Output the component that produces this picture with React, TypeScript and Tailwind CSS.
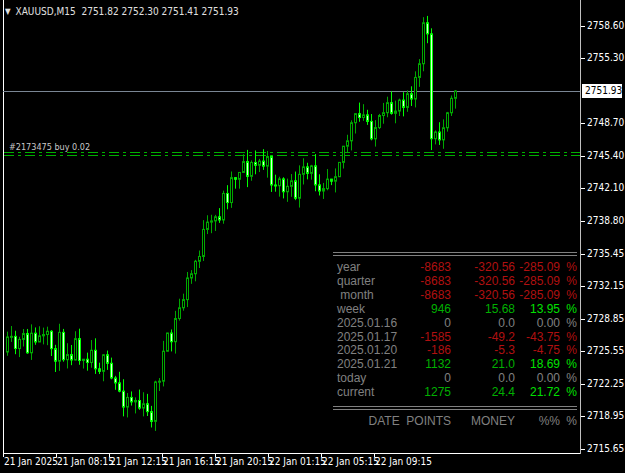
import React from "react";

const anchors: [number, number][] = [
  [6,352],[20,345],[35,340],[50,348],[70,345],[90,350],[100,365],[112,385],[125,395],[135,400],[145,420],[150,410],[160,360],[170,340],[180,300],[190,275],[200,240],[210,230],[220,205],[230,180],[240,160],[250,170],[260,160],[270,175],[280,185],[290,195],[300,180],[310,175],[320,178],[330,170],[340,150],[350,130],[360,118],[370,125],[380,128],[390,110],[400,95],[410,85],[418,70],[422,35],[426,32],[430,140],[434,135],[438,140],[442,128],[446,110],[450,95],[454,91],
];
function interp(x: number) {
  for (let i = 0; i < anchors.length - 1; i++) {
    const [x0, y0] = anchors[i], [x1, y1] = anchors[i + 1];
    if (x >= x0 && x <= x1) return y0 + ((y1 - y0) * (x - x0)) / (x1 - x0);
  }
  return anchors[anchors.length - 1][1];
}
let seed = 11;
const rnd = () => { seed = (seed * 16807) % 2147483647; return seed / 2147483647; };
type C = { x: number; o: number; c: number; h: number; l: number };
const candles: C[] = [];
let prev = 352;
for (let i = 0; i <= 112; i++) {
  const x = 6 + i * 4;
  const c = i === 112 ? 91 : interp(x) + (rnd() - 0.5) * (i > 104 ? 8 : 30);
  const o = prev;
  const h = Math.min(o, c) - rnd() * 12;
  const l = Math.max(o, c) + rnd() * 12;
  candles.push({ x, o, c, h, l });
  prev = c;
}

const prices: [string, number][] = [
  ["2758.60",26],["2755.30",58],["2748.70",123],["2745.40",156],["2742.10",188],["2738.80",221],["2735.45",254],["2732.15",286],["2728.85",319],["2725.55",351],["2722.25",384],["2718.95",416],["2715.65",449],
];
const times: [string, number][] = [
  ["21 Jan 2025",3],["21 Jan 08:15",56],["21 Jan 12:15",109],["21 Jan 16:15",162],["21 Jan 20:15",215],["22 Jan 01:15",268],["22 Jan 05:15",321],["22 Jan 09:15",374],
];

const G = "text-[#808080]";
const R = "text-[#b01010]";
const G1 = "text-[#00b000]";
const G2 = "text-[#00e000]";
const rows: [string, string, string, string, string, string][] = [
  ["year","-8683","-320.56","-285.09",R,R],
  ["quarter","-8683","-320.56","-285.09",R,R],
  [" month","-8683","-320.56","-285.09",R,R],
  ["week","946","15.68","13.95",G1,G2],
  ["2025.01.16","0","0.0","0.00",G,G],
  ["2025.01.17","-1585","-49.2","-43.75",R,R],
  ["2025.01.20","-186","-5.3","-4.75",R,R],
  ["2025.01.21","1132","21.0","18.69",G1,G2],
  ["today","0","0.0","0.00",G,G],
  ["current","1275","24.4","21.72",G1,G2],
];
const cond = { fontFamily: '"DejaVu Sans Condensed", "DejaVu Sans", sans-serif' };

export default function App() {
  return (
    <div className="relative w-[625px] h-[473px] bg-black overflow-hidden" style={{ fontFamily: '"Liberation Sans", Arial, sans-serif' }}>
      <svg className="absolute inset-0" width={625} height={473}>
        <line x1={3.5} y1={0} x2={3.5} y2={453.5} stroke="#fff" />
        <line x1={3} y1={453.5} x2={581} y2={453.5} stroke="#fff" />
        <line x1={580.5} y1={0} x2={580.5} y2={454} stroke="#c0c0c0" />
        {prices.map(([, y]) => <line key={y} x1={581} x2={585} y1={y + 0.5} y2={y + 0.5} stroke="#fff" />)}
        {times.map(([, x]) => <line key={x} x1={x + 0.5} x2={x + 0.5} y1={453} y2={457} stroke="#fff" />)}
        <line x1={3} x2={580} y1={91.5} y2={91.5} stroke="#7a8694" />
        <line x1={4} x2={580} y1={152.5} y2={152.5} stroke="#00b000" strokeDasharray="10 4 3 4" />
        <line x1={4} x2={580} y1={155.5} y2={155.5} stroke="#00b000" strokeDasharray="10 4 3 4" />
        {candles.map((k, i) => {
          const bear = k.c > k.o;
          const top = Math.min(k.o, k.c), bot = Math.max(k.o, k.c);
          const col = bear ? "#00ff00" : "#00a800";
          return (
            <g key={i}>
              <line x1={k.x + 1.5} x2={k.x + 1.5} y1={k.h} y2={k.l} stroke={col} />
              <rect x={k.x + 0.5} y={top} width={2} height={Math.max(bot - top, 1)} fill={bear ? "#d8ffd8" : "#000"} stroke={col} />
            </g>
          );
        })}
      </svg>

      <div className="absolute left-[5px] top-[4px] flex items-center gap-[5px] text-[10px] text-[#e0e0e0]" style={cond}>
        <span className="text-[8px]">▼</span>
        <span>XAUUSD,M15&nbsp; 2751.82 2752.30 2751.41 2751.93</span>
      </div>
      <div className="absolute left-[9px] top-[141px] text-[9px] text-[#c8c8c8]" style={cond}>#2173475 buy 0.02</div>

      {prices.map(([t, y]) => (
        <div key={t} className="absolute left-[587px] text-[10px] text-white leading-none" style={{ ...cond, top: y - 5 }}>{t}</div>
      ))}
      <div className="absolute left-[582px] top-[84px] h-[14px] w-[40px] bg-white text-black text-[10px] leading-[14px] pl-[3px]" style={cond}>2751.93</div>
      {times.map(([t, x]) => (
        <div key={t} className="absolute top-[457px] text-[10px] text-white leading-none whitespace-nowrap" style={{ ...cond, left: x + 1 }}>{t}</div>
      ))}

      <div className="absolute left-[333px] top-[247px] w-[244px] text-[12px] leading-[13.9px]">
        <div className="h-[14px] flex flex-col justify-center gap-[2px]">
          <div className="h-px bg-[#808080]" /><div className="h-px bg-[#808080]" />
        </div>
        {rows.map(([a, b, c, d, cl, cp]) => (
          <div key={a} className="flex whitespace-pre">
            <span className={`${G} w-[72px] pl-[4px]`}>{a}</span>
            <span className={`${cl} w-[46px] text-right`}>{b}</span>
            <span className={`${cl} w-[64px] text-right`}>{c}</span>
            <span className={`${cp} w-[45px] text-right`}>{d}</span>
            <span className={`${cl === G ? G : cp} w-[17px] text-right`}>%</span>
          </div>
        ))}
        <div className="h-[14px] flex flex-col justify-center gap-[2px] mt-[1px]">
          <div className="h-px bg-[#808080]" /><div className="h-px bg-[#808080]" />
        </div>
        <div className={`flex ${G} whitespace-pre`}>
          <span className="w-[118px] text-right">DATE  POINTS</span>
          <span className="w-[64px] text-right">MONEY</span>
          <span className="w-[45px] text-right">%%</span>
          <span className="w-[17px] text-right">%</span>
        </div>
      </div>
    </div>
  );
}
